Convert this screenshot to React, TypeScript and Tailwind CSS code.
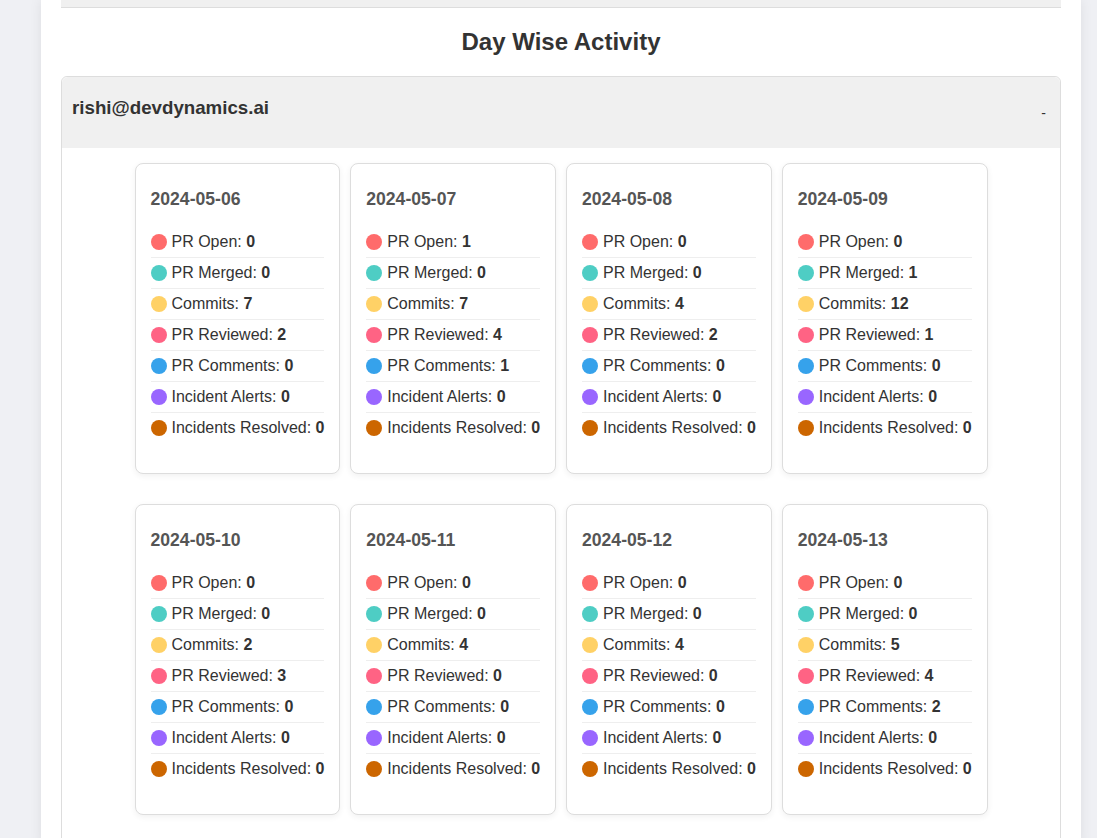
import React from 'react';

type Day = {
  date: string;
  values: number[];
};

const metrics = [
  { label: 'PR Open', color: 'bg-[#ff6b6b]' },
  { label: 'PR Merged', color: 'bg-[#4ecdc4]' },
  { label: 'Commits', color: 'bg-[#ffd166]' },
  { label: 'PR Reviewed', color: 'bg-[#ff6384]' },
  { label: 'PR Comments', color: 'bg-[#36a2eb]' },
  { label: 'Incident Alerts', color: 'bg-[#9966ff]' },
  { label: 'Incidents Resolved', color: 'bg-[#cc6600]' },
];

const days: Day[] = [
  { date: '2024-05-06', values: [0, 0, 7, 2, 0, 0, 0] },
  { date: '2024-05-07', values: [1, 0, 7, 4, 1, 0, 0] },
  { date: '2024-05-08', values: [0, 0, 4, 2, 0, 0, 0] },
  { date: '2024-05-09', values: [0, 1, 12, 1, 0, 0, 0] },
  { date: '2024-05-10', values: [0, 0, 2, 3, 0, 0, 0] },
  { date: '2024-05-11', values: [0, 0, 4, 0, 0, 0, 0] },
  { date: '2024-05-12', values: [0, 0, 4, 0, 0, 0, 0] },
  { date: '2024-05-13', values: [0, 0, 5, 4, 2, 0, 0] },
];

function DayCard({ day }: { day: Day }) {
  return (
    <div className="w-[205.75px] rounded-lg border border-[#ddd] bg-white p-[15px] pb-[30px] shadow-[0_2px_6px_rgba(0,0,0,0.06)]">
      <h4 className="mt-[10px] mb-[18px] text-[17.6px] leading-[20px] font-bold text-[#555]">{day.date}</h4>
      <ul>
        {metrics.map((m, i) => (
          <li
            key={m.label}
            className={`flex items-center py-[6px] text-base leading-[18px] text-[#333] ${
              i < metrics.length - 1 ? 'border-b border-[#eee]' : ''
            }`}
          >
            <span className={`mr-[5px] h-4 w-4 shrink-0 rounded-full ${m.color}`} />
            <span className="whitespace-nowrap">
              {m.label}: <b>{day.values[i]}</b>
            </span>
          </li>
        ))}
      </ul>
    </div>
  );
}

export default function App() {
  return (
    <div className="min-h-screen bg-[#eff0f4] font-['Liberation_Sans',Arial,sans-serif]">
      <div className="ml-[41px] w-[1040px] min-h-screen bg-white px-5 shadow-[0_0_12px_rgba(0,0,0,0.08)]">
        <div className="h-[8px] border-b border-[#ddd] bg-[#f0f0f0]" />

        <h2 className="mt-[20px] mb-[20px] text-center text-2xl leading-[28px] font-bold text-[#333]">
          Day Wise Activity
        </h2>

        <div className="rounded-t-md border border-[#ddd]">
          <div className="flex h-[71px] items-center justify-between rounded-t-md bg-[#f0f0f0] px-[10px]">
            <h3 className="mb-[10px] text-[18.72px] leading-[22px] font-bold text-[#333]">rishi@devdynamics.ai</h3>
            <span className="pr-[4px] text-sm text-[#333]">-</span>
          </div>
          <div className="flex flex-wrap justify-center gap-x-[10px] gap-y-[30px] bg-white px-[10px] pt-[15px] pb-[30px]">
            {days.map((d) => (
              <DayCard key={d.date} day={d} />
            ))}
          </div>
        </div>
      </div>
    </div>
  );
}
